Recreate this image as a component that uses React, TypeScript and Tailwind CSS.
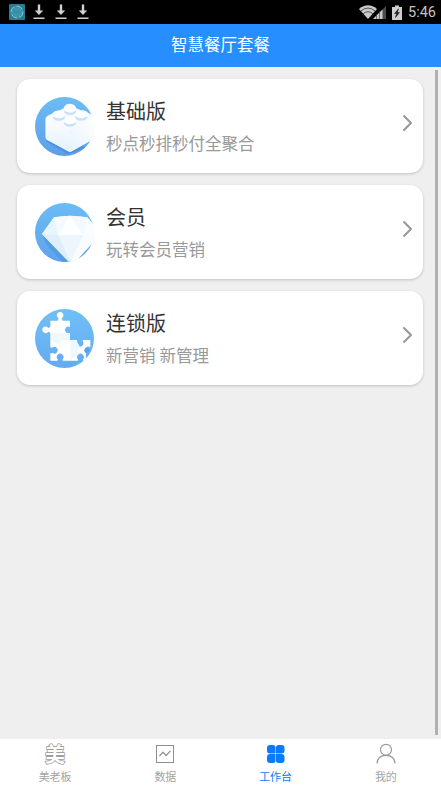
import type { ReactNode } from "react";
import { ChevronRight } from "lucide-react";

function BrickIcon() {
  return (
    <svg viewBox="30 35 177 177" className="size-[59px] shrink-0">
      <defs>
        <linearGradient id="brick-bg" x1="0" y1="0" x2="0" y2="1">
          <stop offset="0" stopColor="#6bbcf5" />
          <stop offset="1" stopColor="#5e9fe8" />
        </linearGradient>
        <linearGradient id="brick-left" x1="0" y1="0" x2="0" y2="1">
          <stop offset="0" stopColor="#fdfeff" />
          <stop offset="1" stopColor="#e3f1fc" />
        </linearGradient>
        <linearGradient id="brick-right" x1="0" y1="1" x2="1" y2="0">
          <stop offset="0" stopColor="#e6f3fd" />
          <stop offset="1" stopColor="#ffffff" />
        </linearGradient>
      </defs>
      <circle cx="118.500" cy="123.500" r="88.500" fill="url(#brick-bg)" />
      <path d="M62 168 L128 207 L180 188 L140 150 Z" fill="#4589dc" opacity="0.65" />
      <path
        d="M62 101 Q62 94 68 91 L83 84 Q88 75 105 75 L116 69 Q118 55 135 55 Q151 56 154 69 L168 75 Q183 73 190 83 L207 90 L207 160 L140 198 Q134 201 128 197 L66 163 Q62 160 62 155 Z"
        fill="#f7fbff"
      />
      <path d="M62 98 L133 135 L133 199 L66 163 Q62 160 62 155 Z" fill="url(#brick-left)" />
      <path d="M133 135 L207 94 L207 160 L140 198 Q137 200 133 199 Z" fill="url(#brick-right)" />
      <g fill="#c9e0f6">
        <ellipse cx="135" cy="79" rx="18" ry="10" />
        <ellipse cx="102" cy="96" rx="18" ry="10" />
        <ellipse cx="169" cy="96" rx="18" ry="10" />
        <ellipse cx="135" cy="114" rx="18" ry="10" />
      </g>
      <g fill="#fdfeff">
        <ellipse cx="135" cy="71" rx="18" ry="11" />
        <ellipse cx="102" cy="88" rx="18" ry="11" />
        <ellipse cx="169" cy="88" rx="18" ry="11" />
        <ellipse cx="135" cy="106" rx="18" ry="11" />
      </g>
    </svg>
  );
}

function DiamondIcon() {
  return (
    <svg viewBox="30 33 177 177" className="size-[59px] shrink-0">
      <defs>
        <linearGradient id="gem-bg" x1="0" y1="0" x2="0" y2="1">
          <stop offset="0" stopColor="#6bbcf5" />
          <stop offset="1" stopColor="#5fa2ea" />
        </linearGradient>
      </defs>
      <circle cx="118.500" cy="121.500" r="88.500" fill="url(#gem-bg)" />
      <path d="M52 128 L64 158 L112 209 L136 209 Z" fill="#4e93e2" opacity="0.6" />
      <path d="M51 126 L87 76 Q135 67 187 76 L207 100 L207 148 L150 210 L130 208 Z" fill="#f0f8fe" />
      <path d="M51 126 L87 76 L100 129 Z" fill="#e9f5fe" />
      <path d="M87 76 L135 71 L100 129 Z" fill="#f4faff" />
      <path d="M135 71 L175 129 L100 129 Z" fill="#fdfeff" />
      <path d="M135 71 L187 76 L175 129 Z" fill="#f3f9fe" />
      <path d="M187 76 L207 100 L207 129 L175 129 Z" fill="#fafdff" />
      <path d="M51 126 L100 129 L137 210 L130 208 Z" fill="#deeefb" />
      <path d="M100 129 L175 129 L137 210 Z" fill="#edf6fd" />
      <path d="M175 129 L207 129 L207 148 L150 210 L137 210 Z" fill="#f8fcff" />
    </svg>
  );
}

function PuzzleIcon() {
  return (
    <svg viewBox="30 33 177 177" className="size-[59px] shrink-0">
      <defs>
        <linearGradient id="puzzle-bg" x1="0" y1="0" x2="0" y2="1">
          <stop offset="0" stopColor="#6fc0f7" />
          <stop offset="1" stopColor="#65aaf0" />
        </linearGradient>
      </defs>
      <circle cx="118.500" cy="121.500" r="88.500" fill="url(#puzzle-bg)" />
      <path
        d="M76 68 L98 68 L101 61 A10 10 0 1 1 110 61 L113 68 L135 68 L135 87 A10 10 0 1 0 135 104 L135 126 L156 126 L157 130 A10 10 0 1 0 173 130 L174 126 L196 126 L196 148 A10 10 0 1 0 183 166 L183 188 L174 188 L174 184 A10 10 0 1 0 159 184 L159 188 L113 188 L113 184 A10 10 0 1 0 98 184 L98 188 L76 188 L76 166 L82 165 A10 10 0 1 0 82 149 L76 148 L76 104 L70 101 A10 10 0 1 1 70 90 L76 87 Z"
        fill="#ffffff"
      />
      <path d="M78 106 L134 106 L134 126 L108 128 L106 145 L78 126 Z" fill="#f0f8fe" />
      <path d="M136 128 L154 128 L163 143 L160 170 L136 186 Z" fill="#eff8fe" />
      <circle cx="186" cy="157" r="7" fill="#5d9fe9" />
    </svg>
  );
}

interface Plan {
  title: string;
  desc: string;
  icon: ReactNode;
}

const plans: Plan[] = [
  { title: "基础版", desc: "秒点秒排秒付全聚合", icon: <BrickIcon /> },
  { title: "会员", desc: "玩转会员营销", icon: <DiamondIcon /> },
  { title: "连锁版", desc: "新营销 新管理", icon: <PuzzleIcon /> },
];

const tabs = [
  {
    label: "美老板",
    icon: (
      <svg viewBox="0 0 24 24" className="size-6">
        <text
          x="12"
          y="19.800"
          textAnchor="middle"
          fontSize="20"
          fontWeight="700"
          fill="#ffffff"
          stroke="#a0a0a0"
          strokeWidth="1.700"
          strokeLinejoin="round"
          paintOrder="stroke"
        >
          美
        </text>
      </svg>
    ),
  },
  {
    label: "数据",
    icon: (
      <svg viewBox="0 0 24 24" className="size-6" fill="none" stroke="#8f8f8f">
        <rect x="3.500" y="3.500" width="17" height="17" />
        <path d="M6.500 14 L10 10.200 L13 13.500 L17.500 8.800" strokeWidth="1.200" />
      </svg>
    ),
  },
  {
    label: "工作台",
    active: true,
    icon: (
      <svg viewBox="0 0 24 24" className="size-6" fill="#0a7bff">
        <path d="M6 3h3a2.500 2.500 0 0 1 2.500 2.500v6H6a3 3 0 0 1-3-3V6a3 3 0 0 1 3-3z" />
        <path d="M14.500 3h3A3 3 0 0 1 20.500 6v2.500a3 3 0 0 1-3 3h-5.500v-6A2.500 2.500 0 0 1 14.500 3z" />
        <path d="M6 12h5.500v6.500A2.500 2.500 0 0 1 9 21H6a3 3 0 0 1-3-3v-3a3 3 0 0 1 3-3z" />
        <path d="M12 12h5.500a3 3 0 0 1 3 3v3a3 3 0 0 1-3 3h-3a2.500 2.500 0 0 1-2.500-2.500z" />
      </svg>
    ),
  },
  {
    label: "我的",
    icon: (
      <svg viewBox="0 0 24 24" className="size-6" fill="none" stroke="#999999" strokeWidth="1.200">
        <circle cx="12" cy="7.800" r="5.500" />
        <path d="M3 21.500 C3.300 16.500 6.500 13.300 12 13.300 S20.700 16.500 21 21.500" />
      </svg>
    ),
  },
];

function DownloadIcon() {
  return (
    <svg viewBox="0 0 12 16" className="h-4 w-3" fill="#d0d0d0">
      <path d="M4.800 0.500h2.400v6h3L6 11 1.800 6.500h3z" />
      <rect x="0.500" y="13.500" width="11" height="1.500" />
    </svg>
  );
}

function StatusBar() {
  return (
    <div className="flex h-6 shrink-0 items-center bg-black pr-[5px] pl-[9px]">
      <svg viewBox="0 0 16 16" className="size-4">
        <rect width="16" height="16" rx="1" fill="#287d96" />
        <circle cx="8" cy="8" r="6" fill="#3f93ab" stroke="#7fc6d3" strokeWidth="1" strokeDasharray="7 2" />
        <path d="M5 8h6" stroke="#388aa5" strokeWidth="2" />
      </svg>
      <div className="ml-2 flex gap-[10px]">
        <DownloadIcon />
        <DownloadIcon />
        <DownloadIcon />
      </div>
      <div className="ml-auto flex items-center">
        <svg viewBox="0 0 18 14" className="h-[14px] w-[18px]">
          <path d="M0 4 Q9 -3.500 18 4 L9 14 Z" fill="#c9c9c9" />
          <path d="M2 5.800 Q9 0.300 16 5.800 M4.300 8.600 Q9 4.800 13.700 8.600" fill="none" stroke="#333333" strokeWidth="0.800" />
        </svg>
        <svg viewBox="0 0 13 14" className="-ml-1 h-[14px] w-[13px]">
          <path d="M0 14 L13 1 V14 Z" fill="#4b4b4b" />
          <path d="M0 14 L9.500 4.500 V14 Z" fill="#c9c9c9" />
          <path d="M3.500 9v5M6.500 6v8" stroke="#333333" strokeWidth="0.600" />
        </svg>
        <svg viewBox="0 0 10 15" className="ml-[6px] h-[15px] w-[10px]">
          <path d="M3 0.500h4v1.500h3v13H0V2h3z" fill="#cecece" />
          <path d="M6.500 3.800 L2.500 8.500h2L3.500 12.500 L7.500 7.500h-2z" fill="#1c1c1c" stroke="#1c1c1c" strokeWidth="0.500" />
        </svg>
        <span className="mt-[2px] ml-[6px] font-[Roboto,sans-serif] text-[14.5px] leading-none text-[#c4c4c4]">5:46</span>
      </div>
    </div>
  );
}

function PlanCard({ plan }: { plan: Plan }) {
  return (
    <div className="flex h-[94px] items-center rounded-[13px] bg-white pr-[8px] pl-[18px] shadow-[0_1px_3px_rgba(0,0,0,0.2)]">
      {plan.icon}
      <div className="mt-1 ml-3 flex-1">
        <h2 className="text-[20px] leading-[30px] text-[#333333]">{plan.title}</h2>
        <p className="mt-[4px] text-[16.5px] leading-[28px] text-[#999999]">{plan.desc}</p>
      </div>
      <ChevronRight className="mb-[6px] h-[28px] w-[15px] text-[#999999]" viewBox="5.5 0 13 24" strokeWidth={1.8} />
    </div>
  );
}

export default function App() {
  return (
    <div className="flex h-screen w-full flex-col overflow-hidden bg-[#efefef] font-[Roboto,'Noto_Sans_CJK_SC',sans-serif]">
      <StatusBar />
      <header className="flex h-[43px] shrink-0 items-center justify-center bg-[#268eff] pt-[2px]">
        <h1 className="text-[16.5px] leading-none text-white">智慧餐厅套餐</h1>
      </header>

      <div className="flex min-h-0 flex-1">
        <main className="flex flex-1 flex-col gap-3 pt-3 pr-3 pl-[17px]">
          {plans.map((plan) => (
            <PlanCard key={plan.title} plan={plan} />
          ))}
        </main>
        {/* Scrollbar */}
        <div className="mt-[3px] mr-[3px] mb-1 w-[3px] bg-[#b0b0b0]" />
      </div>

      <nav className="grid h-[46px] shrink-0 grid-cols-4 bg-white">
        {tabs.map((tab) => (
          <div key={tab.label} className="flex flex-col items-center pt-[3px]">
            {tab.icon}
            <span className={`mt-[3px] text-[11px] leading-[18px] ${tab.active ? "text-[#0a7bff]" : "text-[#a3a3a3]"}`}>
              {tab.label}
            </span>
          </div>
        ))}
      </nav>
    </div>
  );
}
